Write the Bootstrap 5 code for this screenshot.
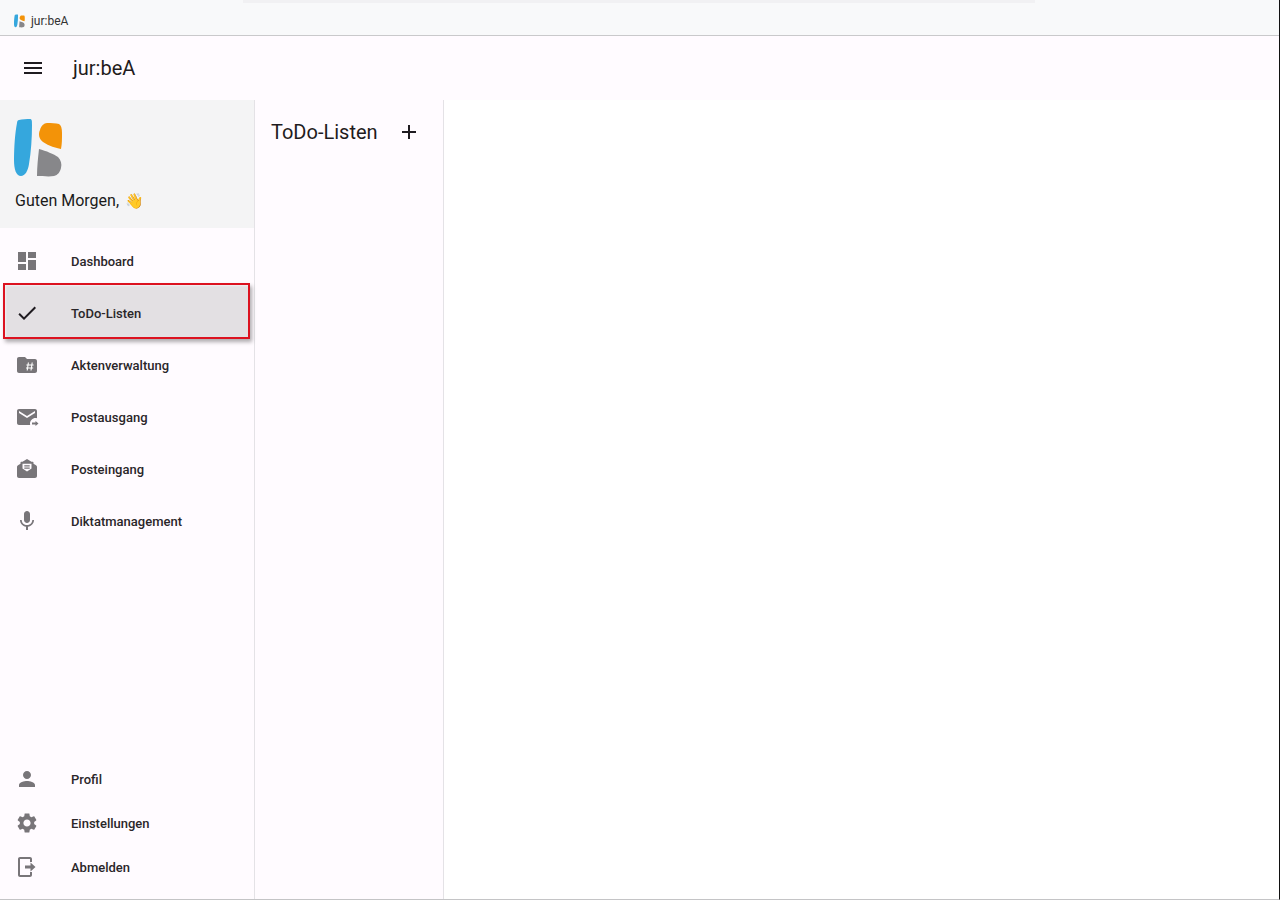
<!DOCTYPE html>
<html lang="de">
<head>
<meta charset="utf-8">
<title>jur:beA</title>
<link href="https://cdn.jsdelivr.net/npm/bootstrap@5.3.0/dist/css/bootstrap.min.css" rel="stylesheet">
<style>
html,body{height:100%;overflow:hidden}
body{font-family:Roboto,"Liberation Sans",sans-serif;background:#fff;color:#1f1b20}
.app-frame{height:900px;width:1280px;border-bottom:1px solid #c4c4c6;border-right:1px solid #111}
.title-strip{height:36px;background:#f8f9fa;border-bottom:1px solid #c9c9cb;position:relative;font-size:12px;color:#333;padding:7px 0 0 14px;gap:6px}
.tab-ghost{position:absolute;left:243px;top:0;width:792px;height:3px;background:#f1f1f3}
.top-bar{height:64px;background:#fffbff;padding-left:21px}
.top-name{font-size:20px;margin-left:28px;line-height:1;color:#1f1b20}
.menu-btn{width:24px;height:24px;color:#1f1b20}
.rail{width:255px;background:#fffbff;border-right:1px solid #e4e2e6}
.rail-head{height:128px;background:#f4f4f5;padding:19px 0 0 14px}
.hello{font-size:16px;margin-top:12px;line-height:24px;padding-left:1px;color:#1a1a1a}
.wave{font-size:15px;margin-left:2px}
.nav-entry{height:52px;padding-left:15px;font-size:13px;font-weight:500;color:#2a2629;text-decoration:none}
.nav-entry svg{width:24px;height:24px;fill:#787579;flex:none;margin-right:32px}
.nav-label{padding-top:2px}
.nav-entry.short{height:44px}
.nav-first{margin-top:7px}
.nav-current{position:relative;width:247px;height:56px;margin:-4px 0 0 3px;padding:4px 0 0 10px;background:#e3e0e3;border:2px solid #dc1220;box-shadow:2px 3px 4px rgba(0,0,0,.32),inset 1px 1px 2px rgba(255,255,255,.55);color:#2a2629}
.nav-current svg{fill:#1f1b20}
.rail-foot{margin-top:auto;padding-bottom:10px}
.list-pane{width:189px;background:#fffbff;border-right:1px solid #e4e2e6;padding:16px 0 0 16px}
.list-title{font-size:20px;line-height:32px;margin:0;font-weight:400;color:#1f1b20}
.add-ico{width:24px;height:24px;margin-left:19px;fill:#1f1b20}
.main-pane{background:#fff}
</style>
</head>
<body>
<div class="app-frame d-flex flex-column">
  <div class="title-strip d-flex align-items-center">
    <div class="tab-ghost"></div>
    <svg width="11" height="14" viewBox="0 0 49 58"><path fill="#35a7dd" d="M5 1C8 0 13 0 16 0c2 0 2 2 2 6 0 13-1 27-3 39-1 7-4 12-8 12-5 0-7-7-7-16C0 28 1 14 3 4c0-2 1-3 2-3z"/><path fill="#f39308" d="M33 4c4 0 9 0 12 1 2 1 3 4 3 9 0 6 0 11-1 16-5-1-12-3-18-7-4-3-5-8-3-12 1-4 4-7 7-7z"/><path fill="#87878a" d="M25 30c7 2 15 5 19 8 3 3 4 7 3 11-1 4-3 7-7 8-5 1-12 0-17 0 0-9 1-18 2-27z"/></svg>
    <span>jur:beA</span>
  </div>
  <div class="top-bar d-flex align-items-center">
    <svg class="menu-btn" viewBox="0 0 24 24" fill="currentColor"><path d="M3 18h18v-2H3v2zm0-5h18v-2H3v2zm0-7v2h18V6H3z"/></svg>
    <span class="top-name">jur:beA</span>
  </div>
  <div class="d-flex flex-grow-1" style="min-height:0">
    <aside class="rail d-flex flex-column">
      <div class="rail-head">
        <svg width="49" height="58" viewBox="0 0 49 58" class="d-block"><path fill="#35a7dd" d="M5 1C8 0 13 0 16 0c2 0 2 2 2 6 0 13-1 27-3 39-1 7-4 12-8 12-5 0-7-7-7-16C0 28 1 14 3 4c0-2 1-3 2-3z"/><path fill="#f39308" d="M33 4c4 0 9 0 12 1 2 1 3 4 3 9 0 6 0 11-1 16-5-1-12-3-18-7-4-3-5-8-3-12 1-4 4-7 7-7z"/><path fill="#87878a" d="M25 30c7 2 15 5 19 8 3 3 4 7 3 11-1 4-3 7-7 8-5 1-12 0-17 0 0-9 1-18 2-27z"/></svg>
        <div class="hello">Guten Morgen, <span class="wave">👋</span></div>
      </div>
      <nav class="d-flex flex-column flex-grow-1">
        <a class="nav-entry nav-first d-flex align-items-center" href="#"><svg viewBox="0 0 24 24"><path d="M3 13h8V3H3v10zm0 8h8v-6H3v6zm10 0h8V11h-8v10zm0-18v6h8V3h-8z"/></svg><span class="nav-label">Dashboard</span></a>
        <a class="nav-entry nav-current d-flex align-items-center" href="#"><svg viewBox="0 0 24 24"><path d="M9 16.170 4.830 12l-1.420 1.410L9 19 21 7l-1.410-1.410z"/></svg><span class="nav-label">ToDo-Listen</span></a>
        <a class="nav-entry d-flex align-items-center" href="#"><svg viewBox="0 0 24 24"><path d="M20 6h-8l-2-2H4c-1.100 0-2 .9-2 2v12c0 1.100.9 2 2 2h16c1.100 0 2-.9 2-2V8c0-1.100-.9-2-2-2z"/><path d="M13.400 9.500l-1.200 8M17.200 9.500l-1.200 8M11.400 12h7.200M11 15h7.200" stroke="#fff" stroke-width="1.100" fill="none"/></svg><span class="nav-label">Aktenverwaltung</span></a>
        <a class="nav-entry d-flex align-items-center" href="#"><svg viewBox="0 0 24 24"><path d="M20 4H4c-1.100 0-2 .9-2 2v12c0 1.100.9 2 2 2h11.200c-.1-.5-.2-1-.2-1.500 0-3 2.500-5.500 5.500-5.500.5 0 1 .1 1.500.2V6c0-1.100-.9-2-2-2zm0 4-8 5-8-5V6l8 5 8-5v2z"/><path d="M17 17.500h3.500V16l3 2.500-3 2.500v-1.500H17z"/></svg><span class="nav-label">Postausgang</span></a>
        <a class="nav-entry d-flex align-items-center" href="#"><svg viewBox="0 0 24 24"><path fill-rule="evenodd" d="M12 2 7.500 4.800H6.500c-.6 0-1 .4-1 1v1L3 8.200C2.400 8.500 2 9.100 2 9.800V19c0 1.100.9 2 2 2h16c1.100 0 2-.9 2-2V9.800c0-.7-.4-1.300-1-1.600l-2.500-1.400v-1c0-.6-.4-1-1-1h-1L12 2zM7.500 6.800h9V11.500L12 14.500 7.500 11.500V6.800zm1.800 1.500v1.300h5.400V8.300H9.300zm0 2.200v1.200h5.400v-1.200H9.300z"/></svg><span class="nav-label">Posteingang</span></a>
        <a class="nav-entry d-flex align-items-center" href="#"><svg viewBox="0 0 24 24"><path d="M12 14c1.660 0 3-1.340 3-3V5c0-1.660-1.340-3-3-3S9 3.340 9 5v6c0 1.660 1.340 3 3 3zm5.300-3c0 3-2.540 5.100-5.300 5.100S6.700 14 6.700 11H5c0 3.410 2.720 6.230 6 6.720V21h2v-3.280c3.280-.48 6-3.300 6-6.720h-1.700z"/></svg><span class="nav-label">Diktatmanagement</span></a>
        <div class="rail-foot d-flex flex-column">
          <a class="nav-entry short d-flex align-items-center" href="#"><svg viewBox="0 0 24 24"><path d="M12 12c2.210 0 4-1.790 4-4s-1.790-4-4-4-4 1.790-4 4 1.790 4 4 4zm0 2c-2.670 0-8 1.340-8 4v2h16v-2c0-2.660-5.330-4-8-4z"/></svg><span class="nav-label">Profil</span></a>
          <a class="nav-entry short d-flex align-items-center" href="#"><svg viewBox="0 0 24 24"><path d="M19.140 12.940c.04-.3.060-.61.060-.94 0-.32-.02-.64-.07-.94l2.030-1.580c.18-.14.230-.41.120-.61l-1.920-3.320c-.12-.22-.37-.29-.59-.22l-2.390.96c-.5-.38-1.030-.7-1.620-.94l-.36-2.540c-.04-.24-.24-.41-.48-.41h-3.840c-.24 0-.43.170-.47.410l-.36 2.540c-.59.240-1.130.570-1.620.94l-2.390-.96c-.22-.08-.47 0-.59.220L2.740 8.870c-.12.210-.08.470.12.610l2.030 1.580c-.05.3-.09.630-.09.940s.02.640.07.940l-2.030 1.580c-.18.140-.23.410-.12.610l1.920 3.320c.12.220.37.290.59.220l2.390-.96c.5.380 1.030.7 1.620.94l.36 2.540c.05.240.24.410.48.410h3.840c.24 0 .44-.17.47-.41l.36-2.540c.59-.24 1.130-.56 1.620-.94l2.390.96c.22.080.47 0 .59-.22l1.920-3.320c.12-.22.070-.47-.12-.61l-2.010-1.580zM12 15.600c-1.980 0-3.600-1.620-3.600-3.600s1.620-3.600 3.600-3.600 3.600 1.620 3.600 3.600-1.620 3.600-3.600 3.600z"/></svg><span class="nav-label">Einstellungen</span></a>
          <a class="nav-entry short d-flex align-items-center" href="#"><svg viewBox="0 0 24 24"><path d="M5 2h10c1.100 0 2 .9 2 2v3h-2V4H5v16h10v-3h2v3c0 1.100-.9 2-2 2H5c-1.100 0-2-.9-2-2V4c0-1.100.9-2 2-2z"/><path d="M15.500 7.500 20.500 12l-5 4.500v-3H10v-3h5.500z"/></svg><span class="nav-label">Abmelden</span></a>
        </div>
      </nav>
    </aside>
    <section class="list-pane">
      <div class="d-flex align-items-center">
        <h2 class="list-title">ToDo-Listen</h2>
        <svg class="add-ico" viewBox="0 0 24 24"><path d="M19 13h-6v6h-2v-6H5v-2h6V5h2v6h6v2z"/></svg>
      </div>
    </section>
    <main class="main-pane flex-grow-1"></main>
  </div>
</div>
<script src="https://cdn.jsdelivr.net/npm/bootstrap@5.3.0/dist/js/bootstrap.bundle.min.js"></script>
</body>
</html>
